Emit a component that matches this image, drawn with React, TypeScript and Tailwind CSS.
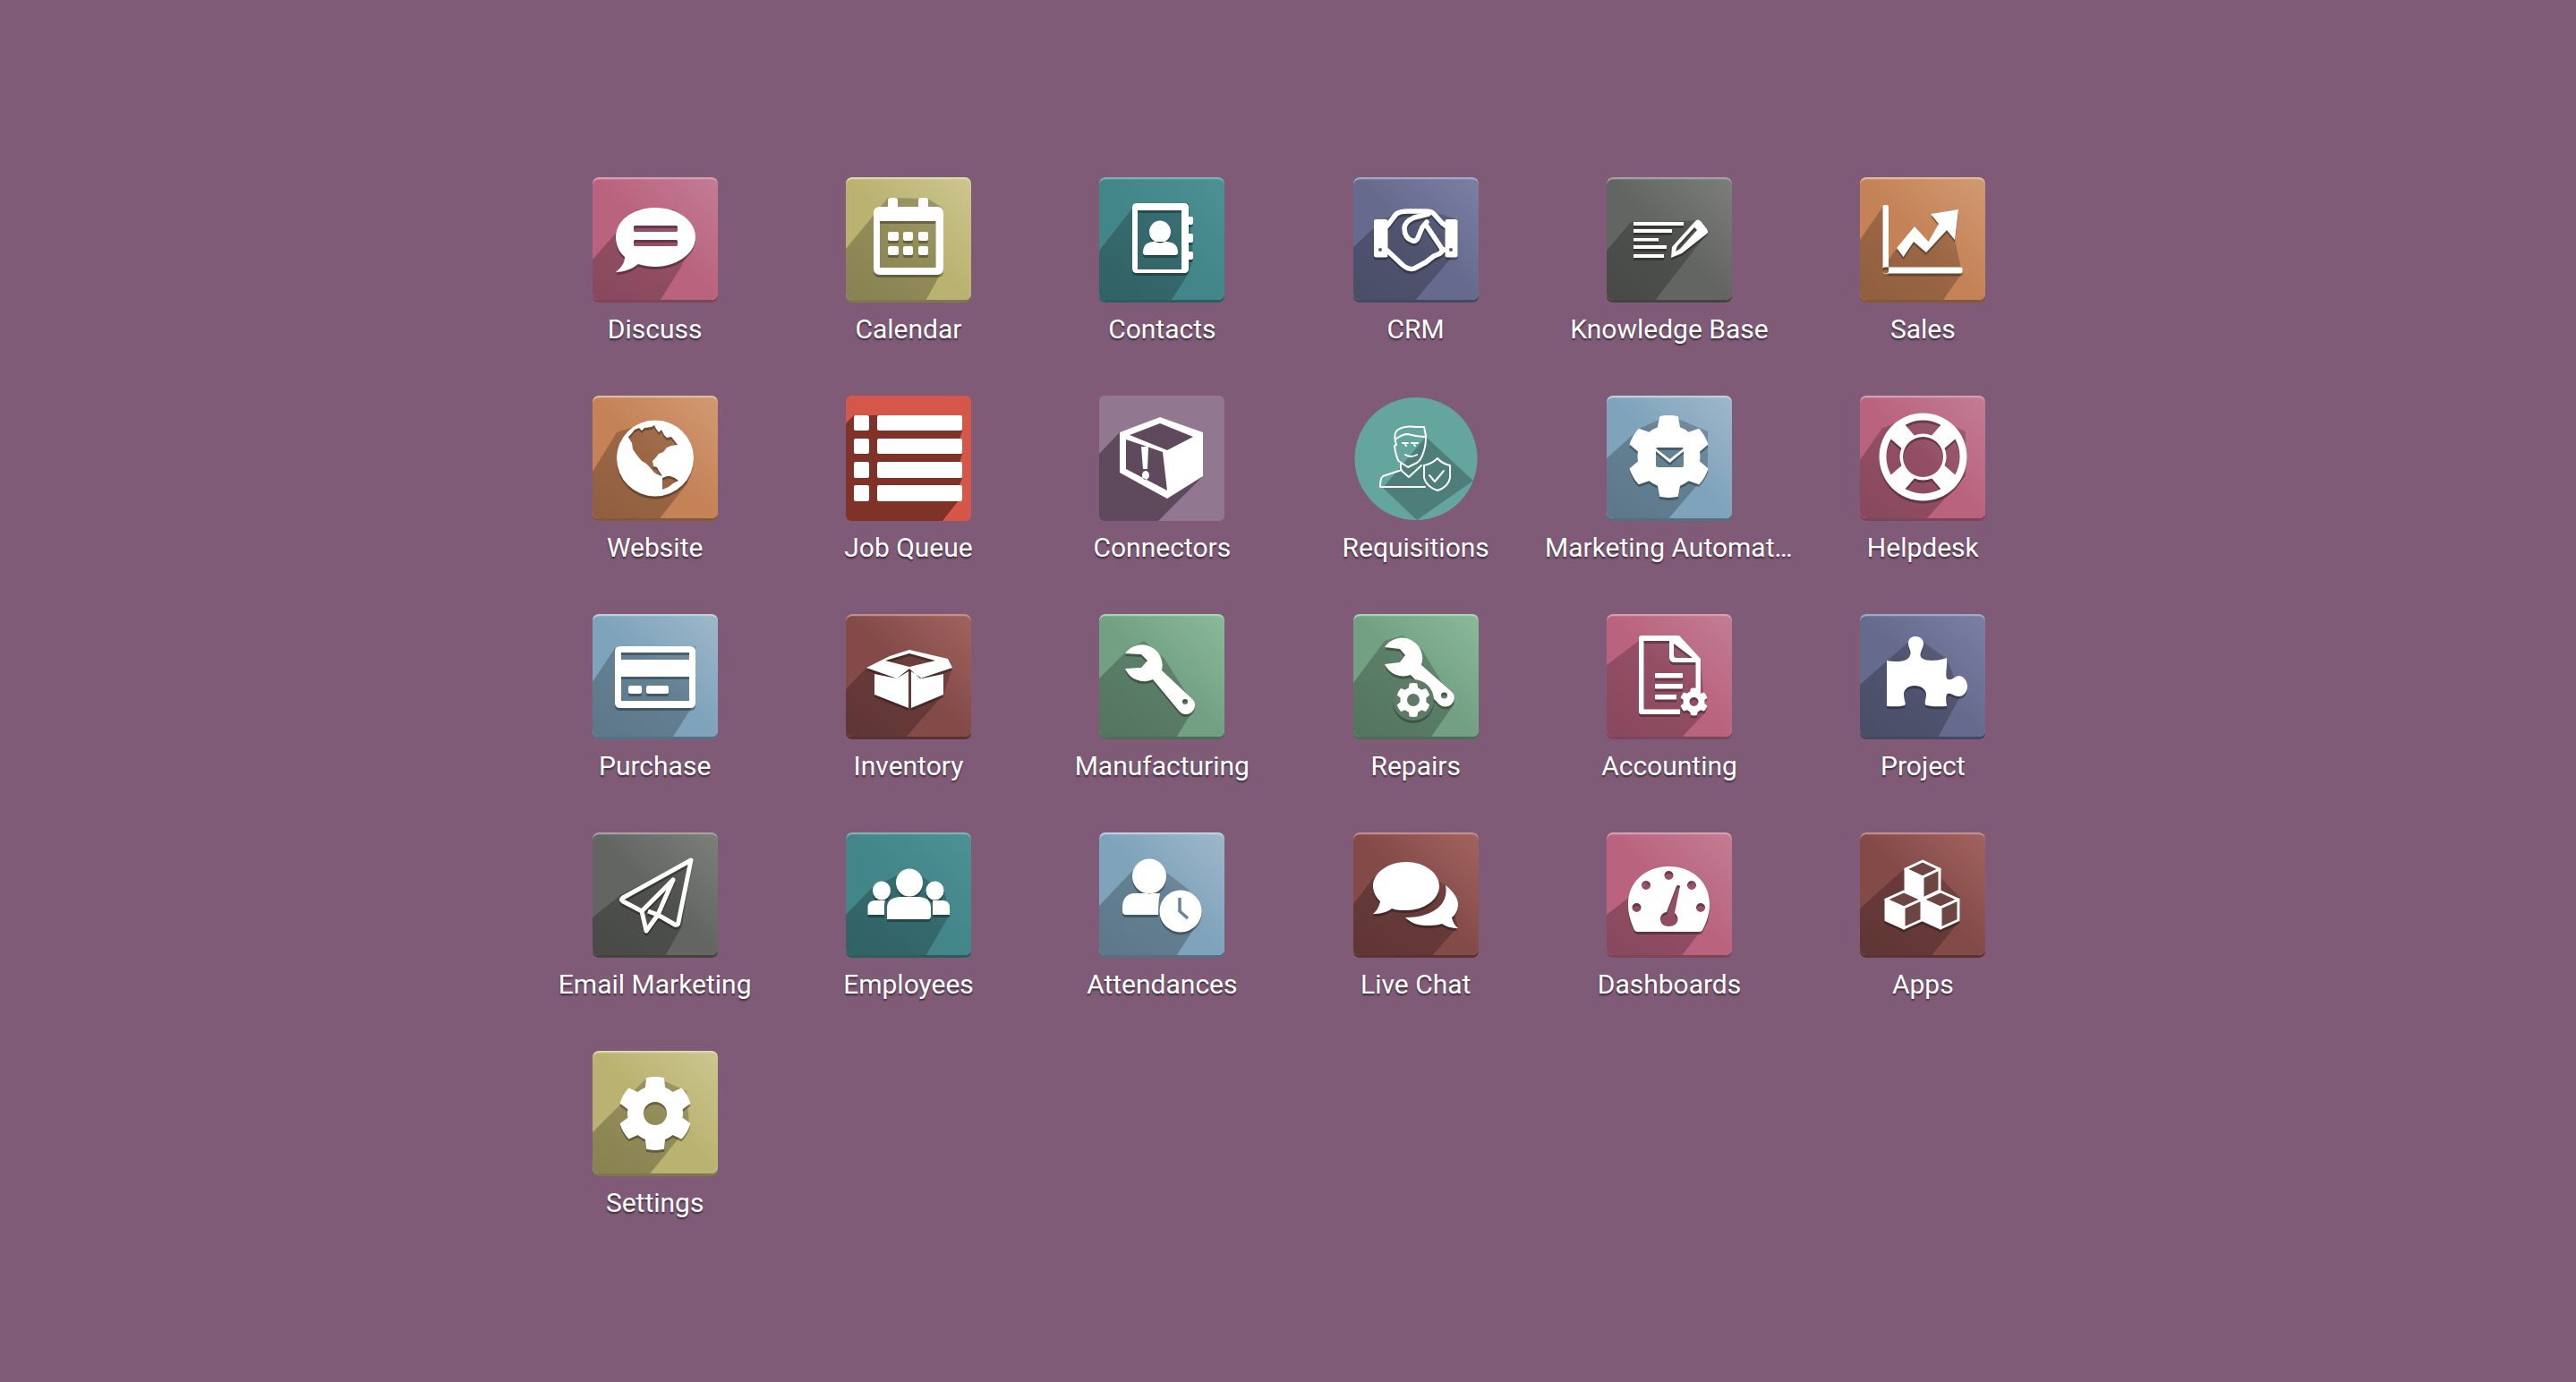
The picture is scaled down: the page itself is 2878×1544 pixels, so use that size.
import React from "react";

type Theme = { light: string; base: string; hi: string; edge: string };
const T: Record<string, Theme> = {
  pink: { light: "#c27c93", base: "#ba637f", hi: "#d59fb0", edge: "#7d4558" },
  yellow: { light: "#ccc690", base: "#bab270", hi: "#ddd9ae", edge: "#7d784e" },
  teal: { light: "#4c9194", base: "#43868a", hi: "#7fb2b5", edge: "#2e5b5e" },
  indigo: { light: "#7b7fa3", base: "#666a8d", hi: "#a5a8c1", edge: "#454860" },
  gray: { light: "#7c7e7a", base: "#636562", hi: "#a3a4a1", edge: "#434442" },
  orange: { light: "#d19a72", base: "#c58257", hi: "#e0bb9f", edge: "#85583c" },
  blue: { light: "#9eb7ca", base: "#7ea3bb", hi: "#bfd0dc", edge: "#557080" },
  brown: { light: "#a2635f", base: "#834a48", hi: "#bf908c", edge: "#593332" },
  green: { light: "#8aba99", base: "#73a083", hi: "#add0b8", edge: "#4e6d59" },
};

function gear(cx: number, cy: number, rO: number, rR: number, a1 = 14, a2 = 19) {
  let d = "";
  const pt = (r: number, a: number) => {
    const t = ((a - 90) * Math.PI) / 180;
    return `${(cx + r * Math.cos(t)).toFixed(2)} ${(cy + r * Math.sin(t)).toFixed(2)}`;
  };
  for (let i = 0; i < 6; i++) {
    const c = i * 60;
    d += `${i === 0 ? "M" : "L"}${pt(rR, c - a2)} L${pt(rO, c - a1)} A${rO} ${rO} 0 0 1 ${pt(rO, c + a1)} L${pt(rR, c + a2)} A${rR} ${rR} 0 0 1 ${pt(rR, c + 60 - a2)} `;
  }
  return d + "Z ";
}
const circ = (cx: number, cy: number, rx: number, ry = rx) =>
  `M${cx - rx} ${cy} A${rx} ${ry} 0 1 0 ${cx + rx} ${cy} A${rx} ${ry} 0 1 0 ${cx - rx} ${cy} Z `;
const rrect = (x: number, y: number, w: number, h: number, r: number) =>
  `M${x + r} ${y} H${x + w - r} Q${x + w} ${y} ${x + w} ${y + r} V${y + h - r} Q${x + w} ${y + h} ${x + w - r} ${y + h} H${x + r} Q${x} ${y + h} ${x} ${y + h - r} V${y + r} Q${x} ${y} ${x + r} ${y} Z `;
function sector(cx: number, cy: number, r1: number, r2: number, mid: number, half: number, halfIn: number) {
  const p = (r: number, a: number) => {
    const t = ((a - 90) * Math.PI) / 180;
    return `${(cx + r * Math.cos(t)).toFixed(2)} ${(cy + r * Math.sin(t)).toFixed(2)}`;
  };
  return `M${p(r2, mid - half)} A${r2} ${r2} 0 0 1 ${p(r2, mid + half)} L${p(r1, mid + halfIn)} A${r1} ${r1} 0 0 0 ${p(r1, mid - halfIn)} Z `;
}
function cube(x: number, y: number, w: number, h: number, H: number, sh: string) {
  const A = [x, y], L = [x - w, y + h], R = [x + w, y + h], C = [x, y + 2 * h];
  const BL = [x - w, y + h + H], BR = [x + w, y + h + H], B = [x, y + 2 * h + H];
  const s = (a: number[][]) => a.map((p) => p.join(",")).join(" ");
  return (
    <g strokeLinejoin="round">
      <polygon points={s([A, R, C, L])} fill={sh} stroke="#fff" strokeWidth="3" />
      <polygon points={s([L, C, B, BL])} fill="#fff" stroke="#fff" strokeWidth="3" />
      <polygon points={s([C, R, BR, B])} fill={sh} stroke="#fff" strokeWidth="3" />
    </g>
  );
}

const W = ({ d }: { d: string }) => <path d={d} fill="#fff" fillRule="evenodd" />;

type App = { name: string; theme?: string; shadow: string; glyph: React.ReactNode; kind?: "flat" | "circle"; flat?: [string, string] };

const apps: App[] = [
  {
    name: "Discuss", theme: "pink",
    shadow: "28,60 0,92 0,140 74,140 99,100 115,67 90,36 50,36",
    glyph: <W d={"M70 34 C46 34 26 48 26 67 C26 77 31 85 36 89 C36 96 32 101 26 106 C34 106 44 103 51 97 C57 99 64 100 70 100 C94 100 115 85 115 67 C115 48 94 34 70 34 Z " + rrect(46, 54, 49, 7, 1.5) + rrect(46, 70, 49, 7, 1.5)} />,
  },
  {
    name: "Calendar", theme: "yellow",
    shadow: "47,23 0,80 0,140 88,140 108,104 109,35 92,24",
    glyph: <W d={"M50 23 H55 Q58 23 58 26 V33 H81 V26 Q81 23 84 23 H89 Q92 23 92 26 V33 H102 Q109 33 109 40 V102 Q109 109 102 109 H38 Q31 109 31 102 V40 Q31 33 38 33 H47 V26 Q47 23 50 23 Z M38 49 V101 H100.5 V49 Z " + rrect(47, 61, 12, 10, 2) + rrect(64, 61, 11, 10, 2) + rrect(81, 61, 11, 10, 2) + rrect(47, 77, 12, 10, 2) + rrect(64, 77, 11, 10, 2) + rrect(81, 77, 11, 10, 2)} />,
  },
  {
    name: "Contacts", theme: "teal",
    shadow: "37,35 0,82 0,140 79,140 100,107 105,90 100,29 40,29",
    glyph: <W d={rrect(37, 29, 63, 78, 5) + rrect(43, 37, 49, 66, 0) + circ(68, 61, 12, 12.5) + "M49 84 Q49 73 60 72 L76 72 Q88 73 88 84 Q88 87 85 87 H52 Q49 87 49 84 Z M100 44 H103 Q105 44 105 46 V51 Q105 53 103 53 H100 Z M100 63 H103 Q105 63 105 65 V71 Q105 73 103 73 H100 Z M100 83 H103 Q105 83 105 85 V90 Q105 92 103 92 H100 Z"} />,
  },
  {
    name: "CRM", theme: "indigo",
    shadow: "30,50 0,78 0,140 67,140 116,82 116,47 86,38 48,40",
    glyph: (
      <g fill="none" stroke="#fff" strokeWidth="5.5" strokeLinejoin="round" strokeLinecap="round">
        <path d="M25.5 49.5 H36 V87 H25.5 Z" fill="#fff" strokeWidth="5" />
        <path d="M105 49.5 H114 V87 H105 Z" fill="#fff" strokeWidth="5" />
        <path d="M38 54 L48 41 Q52 38 61 38 H80 Q88 38 90 41 L99 51 L103 54" />
        <path d="M84 41 L68 45 Q57 50 57 57 Q57 68 66 71 Q70 72 72 68 L77 56 L82 50" />
        <path d="M81 53 L99 80 Q100 84 95 86 L90 88 L81 95 L68 102 Q62 104 55 98 L38 82" />
        <path d="M99 81 L104 81" />
        <circle cx="30" cy="81" r="2" fill="#565a78" stroke="none" />
        <circle cx="109" cy="81" r="2" fill="#565a78" stroke="none" />
      </g>
    ),
  },
  {
    name: "Knowledge Base", theme: "gray",
    shadow: "27,50 0,82 0,140 52,140 113,62 105,48 60,50",
    glyph: <W d="M30 50 H86 V54 H30 Z M30 58 H73 V62 H30 Z M30 68 H58 V71.5 H30 Z M30 76 H67 V80 H30 Z M30 86 H64 V90 H30 Z M72 90 L73 78 L99 49 Q102 46 105 49 L112 58 Q114 61 112 63 L84 85 Z M77 83 L79 77 L98 56 L101 59 L82 80 Z" />,
  },
  {
    name: "Sales", theme: "orange",
    shadow: "25,34 0,70 0,140 91,140 114,107 106,70 110,36 79,41 88,52 76.5,72 61,55 41,79 32,92 32,31",
    glyph: <W d={rrect(25.5, 31, 6.5, 76, 2) + rrect(25.5, 100.5, 89, 7, 2) + "M41 79 L61 55 L76.5 72 L88 52 L79 41 L110 36 L106 70 L97 59 L74 84 L60 72 L48.5 89 Z"} />,
  },
  {
    name: "Website", theme: "orange",
    shadow: "27,41 0,85 0,140 73,140 106,98 113,70 70,27",
    glyph: <W d={circ(70, 70, 43, 42.5) + "M40 46 L44 42 L47 38 L52 36 L55 39 L58 36 L66 35 L69 33 L71 37 L74 41 L77 38 L80 44 L83 47 L88 46 L92 51 L95 55 L88 56 L83 58 L79 63 L74 65 L70 70 L67 73 L68 79 L72 80 L74 84 L78 90 L72 88 L68 85 L64 80 L60 76 L55 73 L50 67 L45 60 L44 53 L42 50 Z M78 92 L83 90 L87 90 L92 92 L96 95 L90 98 L85 102 L78 105 L78 98 Z"} />,
  },
  {
    name: "Job Queue", kind: "flat", flat: ["#d5574a", "#7f3328"],
    shadow: "9,22 0,31 0,140 108,140 130,112 120,118 130,92 122,92 130,65 122,65 130,39 120,22",
    glyph: <W d={rrect(9, 22, 17, 17, 2) + rrect(35, 22, 95, 17, 2) + rrect(9, 48, 17, 17, 2) + rrect(35, 48, 95, 17, 2) + rrect(9, 74, 17, 18, 2) + rrect(35, 74, 95, 18, 2) + rrect(9, 100, 17, 18, 2) + rrect(35, 100, 95, 18, 2)} />,
  },
  {
    name: "Connectors", kind: "flat", flat: ["#917890", "#5e4a5c"],
    shadow: "23,41 0,65 0,140 66,140 116,90 116,41 68,24",
    glyph: <W d="M68 24 L116 41 V90 L76 115 L23 86 V41 Z M34 44 L68 31 L105 46 L76 61 Z M30 49 L71 63 L76 106 L30 82 Z M47 57 H55 L54 82 H49 Z M52 84 A4 5 0 1 1 51.9 84 Z" />,
  },
  {
    name: "Requisitions", kind: "circle", flat: ["#64a59e", "#4d7e79"],
    shadow: "81,46 134,95 71,139 33,103",
    glyph: (
      <g fill="none" stroke="#fff" strokeWidth="2" strokeLinejoin="round" strokeLinecap="round">
        <path d="M48 55 Q44 42 50 38 Q58 33 70 35 L79 35 L81 45 Q81 56 79 61 Q76 72 71 75 L61 80 L50.5 73 Q47 66 46 56 Z" />
        <path d="M48 48 Q55 43 61 43 Q72 46 81 46" />
        <path d="M55 53 L61 53 M65 53 L72 53 M58 55 L59 56 M68 55 L69 56" />
        <path d="M58 66 Q64 70 71 66" />
        <path d="M53 75 V83 L62 91 L76 78 M54 83 L33 90 Q30 92 30 102 H80" />
        <path d="M94 70 Q88 76 79 78 V92 Q82 102 94 106 Q106 102 108 92 V78 Q99 76 94 70 Z" />
        <path d="M85 89 L91 96 L101 84" />
      </g>
    ),
  },
  {
    name: "Marketing Automation", theme: "blue",
    shadow: "38,36 0,70 0,140 67,140 113,86 113,40 70,22",
    glyph: (
      <g>
        <W d={gear(69.5, 68, 46, 35, 13, 21) + rrect(55, 58, 31, 22, 2)} />
        <path d="M55 62 L70.5 75 L86 62 L86 59 L70.5 71 L55 59 Z" fill="#fff" />
      </g>
    ),
  },
  {
    name: "Helpdesk", theme: "pink",
    shadow: "25,36 0,72 0,140 72,140 118,90 118,40 70,20",
    glyph: <W d={circ(70.5, 68.5, 49) + circ(70.5, 68.5, 22.5) + sector(70.5, 68.5, 26, 41, 0, 29, 22) + sector(70.5, 68.5, 26, 41, 90, 29, 22) + sector(70.5, 68.5, 26, 41, 180, 29, 22) + sector(70.5, 68.5, 26, 41, 270, 29, 22)} />,
  },
  {
    name: "Purchase", theme: "blue",
    shadow: "25,38 0,76 0,140 88,140 115,98 115,36 30,36",
    glyph: <W d={rrect(25, 36, 90, 69, 6) + "M32 43 H108 V51 H32 Z M32 70 H108 V97 H32 Z " + rrect(40, 80, 15, 9, 2) + rrect(60, 80, 25, 9, 2)} />,
  },
  {
    name: "Inventory", theme: "brown",
    shadow: "23,60 0,84 0,140 65,140 109,90 119,60 71,40",
    glyph: <W d="M23 60 L49 47 L71 40 L114 50 L119 60 L83 72 L71 61 L57 72 Z M44 52 L71 59 L100 52 L71 44 Z M32 67 L57 72 L70 64 V105 L32 90 Z M73 64 L85 72 L109 67 V90 L73 105 Z" />,
  },
  {
    name: "Manufacturing", theme: "green",
    shadow: "30,42 0,72 0,140 85,140 107,104 73,50 50,30",
    glyph: <W d={"M29 44 L47 45 L54 52 L47 60 L29 61 A23 23 0 0 0 60 73 L89 108 A9.8 9.8 0 0 0 105 96 L70 63 A23 23 0 0 0 29 44 Z " + circ(96, 98, 3)} />,
  },
  {
    name: "Repairs", theme: "green",
    shadow: "35,30 0,77 0,140 85,140 113,100 77,40 55,24",
    glyph: (
      <g>
        <W d={"M35 37 L52 39 L58 46 L52 54 L35 56 A23 23 0 0 0 64 68 L96 101 A10 10 0 0 0 111 88 L76 57 A23 23 0 0 0 35 37 Z " + circ(101.5, 91, 3.5)} />
        <circle cx="67" cy="96" r="23" fill="#5f7a66" />
        <W d={gear(67, 96, 19, 14.5, 13, 21) + circ(67, 96, 7)} />
      </g>
    ),
  },
  {
    name: "Accounting", theme: "pink",
    shadow: "36,30 0,57 0,140 82,140 110,110 105,50 80,24",
    glyph: (
      <g>
        <W d={"M36 27 Q36 24 39 24 H81 L105 50 V88 H99.5 V54 H76 Q70 54 70 48 V30 H41.5 V106.5 H82 V112 H39 Q36 112 36 109 Z M75 33 V46 Q75 49 78 49 H96 Z " + rrect(54, 66, 31, 5.5, 1) + rrect(54, 78, 31, 5.5, 1) + rrect(54, 90, 24, 5.5, 1)} />
        <W d={gear(97.5, 98, 15.5, 12, 13, 21) + circ(97.5, 98, 5)} />
      </g>
    ),
  },
  {
    name: "Project", theme: "indigo",
    shadow: "51,34 0,79 0,140 86,140 113,90 97,50 62,25",
    glyph: <W d="M30 52 C40 54 54 54 56 46 C58 42 54 38 54 33 C54 27 58 25 62 25 C67 25 71 28 71 33 C71 38 66 44 68 48 C72 54 90 52 97 49 C98 58 95 68 97 72 C101 76 105 70 110 69 C116 69 120 75 120 81 C120 87 116 92 110 92 C105 92 100 86 97 90 C95 95 97 100 97 103 C90 103 82 104 74 102 C71 100 74 96 74 90 C74 84 68 80 61 80 C54 80 49 84 49 90 C49 96 52 100 50 102 C44 104 36 103 30 103 Z" />,
  },
  {
    name: "Email Marketing", theme: "gray",
    shadow: "31,70 0,95 0,140 80,140 100,105 112,28",
    glyph: (
      <g fill="none" stroke="#fff" strokeWidth="5" strokeLinejoin="round">
        <path d="M110 31 L34 73 Q31 75 34 77 L55 88 L60 110 L73 92 L92 103 Q96 104 96 100 Z" />
        <path d="M55 88 L90 53 L73 92 L62 88" />
      </g>
    ),
  },
  {
    name: "Employees", theme: "teal",
    shadow: "29,62 0,92 0,140 88,140 116,92 110,65 71,41",
    glyph: <W d={circ(71, 56, 15, 15.5) + circ(40, 65, 10, 10.5) + circ(99.5, 65, 10, 10.5) + "M46 97 Q47 97 49 97 H92 Q95 97 95 93 V84 Q95 73 82 72 H60 Q46 73 46 84 V93 Z M24.5 92 V84 Q24.5 76 33 76 H44 Q43 78 43 84 V92 Z M97 76 H108 Q116 76 116 84 V92 H97 V84 Q97 78 97 76 Z"} />,
  },
  {
    name: "Attendances", theme: "blue",
    shadow: "37,43 0,82 0,140 85,140 114,95 100,64 56,30",
    glyph: (
      <g>
        <W d={circ(56, 49, 19, 19.5) + "M26 84 Q26 70 38 68 H68 Q66 78 66 92 H30 Q26 92 26 88 Z"} />
        <W d={circ(91, 88, 23.5)} />
        <path d="M90 73 V88 L99 96" fill="none" stroke="#6c8396" strokeWidth="3.5" />
      </g>
    ),
  },
  {
    name: "Live Chat", theme: "brown",
    shadow: "23,50 0,80 0,140 86,140 117,105 103,59 59,33",
    glyph: <W d="M59 33 C39 33 22 45 22 60 C22 67 26 73 30 77 C29 83 26 88 22 91 C30 91 38 89 43 85 C48 87 53 87 59 87 C79 87 96 75 96 60 C96 45 79 33 59 33 Z M103 59 C112 66 117 74 117 80 C117 87 114 92 110 95 C111 100 113 104 117 107 C110 107 103 105 99 102 C93 104 87 104 81 104 C71 104 63 100 58 95 C80 96 108 85 103 59 Z" />,
  },
  {
    name: "Dashboards", theme: "pink",
    shadow: "28,70 0,92 0,140 82,140 113,100 115,70 69,38",
    glyph: <W d={"M30 107 C26 97 24 90 24 80 C24 55 44 38 69.5 38 C95 38 115 55 115 80 C115 90 112 100 108 107 Q107 111 103 111 L35 111 Q31 111 30 107 Z " + circ(69.5, 48, 5, 5) + circ(44, 59, 5, 5) + circ(95, 59, 5, 5) + circ(33.5, 84, 5, 5) + circ(105, 84, 5, 5) + "M78 60 Q80 58 82 60 L76 90 C78 92 79.5 94 79.5 97 C79.5 102 75 105 69.5 105 C64 105 60 102 60 97 C60 93 63 89 67 89 Z"} />,
  },
  {
    name: "Apps", theme: "brown",
    shadow: "48,42 0,85 0,140 78,140 112,98 112,73 70,30",
    glyph: (
      <g>
        {cube(70, 32, 19, 9, 24, "#6d4543")}
        {cube(49, 66, 20, 9, 23, "#6d4543")}
        {cube(90, 66, 20, 9, 23, "#6d4543")}
      </g>
    ),
  },
  {
    name: "Settings", theme: "yellow",
    shadow: "58,33 0,91 0,140 62,140 108,83 105,45 70,29",
    glyph: <W d={gear(70, 70, 41, 31, 14, 21) + circ(70, 70, 13)} />,
  },
];

function Icon({ app, i }: { app: App; i: number }) {
  const g = `g${i}`, c = `c${i}`, s = `s${i}`;
  if (app.kind) {
    const [bg, sh] = app.flat!;
    const isC = app.kind === "circle";
    return (
      <svg viewBox="0 0 140 140" className="h-[140px] w-[140px]">
        <defs>
          <clipPath id={c}>{isC ? <ellipse cx="70" cy="70.5" rx="68.5" ry="68.5" /> : <rect width="140" height="140" rx="6" />}</clipPath>
        </defs>
        <g clipPath={`url(#${c})`}>
          <rect width="140" height="140" fill={bg} />
          <polygon points={app.shadow} fill={sh} />
        </g>
        {app.glyph}
      </svg>
    );
  }
  const t = T[app.theme!];
  return (
    <svg viewBox="0 0 140 140" className="h-[140px] w-[140px]">
      <defs>
        <linearGradient id={g} x1="1" y1="0" x2="0" y2="1">
          <stop offset="0" stopColor={t.light} />
          <stop offset="0.5" stopColor={t.base} />
          <stop offset="1" stopColor={t.base} />
        </linearGradient>
        <linearGradient id={s} gradientUnits="userSpaceOnUse" x1="70" y1="50" x2="10" y2="140">
          <stop offset="0" stopColor="#000" stopOpacity="0.2" />
          <stop offset="1" stopColor="#000" stopOpacity="0.27" />
        </linearGradient>
        <clipPath id={c}>
          <rect y="0" width="140" height="137" rx="7" />
        </clipPath>
      </defs>
      <rect width="140" height="140" rx="7" fill={t.edge} />
      <rect width="140" height="137" rx="7" fill={t.hi} />
      <g clipPath={`url(#${c})`}>
        <rect y="2.2" width="140" height="136" rx="7" fill={`url(#${g})`} />
        <polygon points={app.shadow} fill={`url(#${s})`} />
      </g>
      <g className="drop-shadow-[0_3px_0_rgba(0,0,0,0.3)]">{app.glyph}</g>
    </svg>
  );
}

export default function App() {
  return (
    <div className="min-h-[1544px] bg-[#805b77] pt-[198px] font-['Roboto',sans-serif]">
      <div className="ml-[590px] grid w-[1700px] grid-cols-6">
        {apps.map((a, i) => (
          <div key={a.name} className="flex h-[244px] flex-col items-center">
            <Icon app={a} i={i} />
            <div className="mt-[10px] w-[278px] truncate text-center text-[30px] leading-[40px] text-white [text-shadow:0_2px_2px_rgba(0,0,0,0.55)]">
              {a.name}
            </div>
          </div>
        ))}
      </div>
    </div>
  );
}
